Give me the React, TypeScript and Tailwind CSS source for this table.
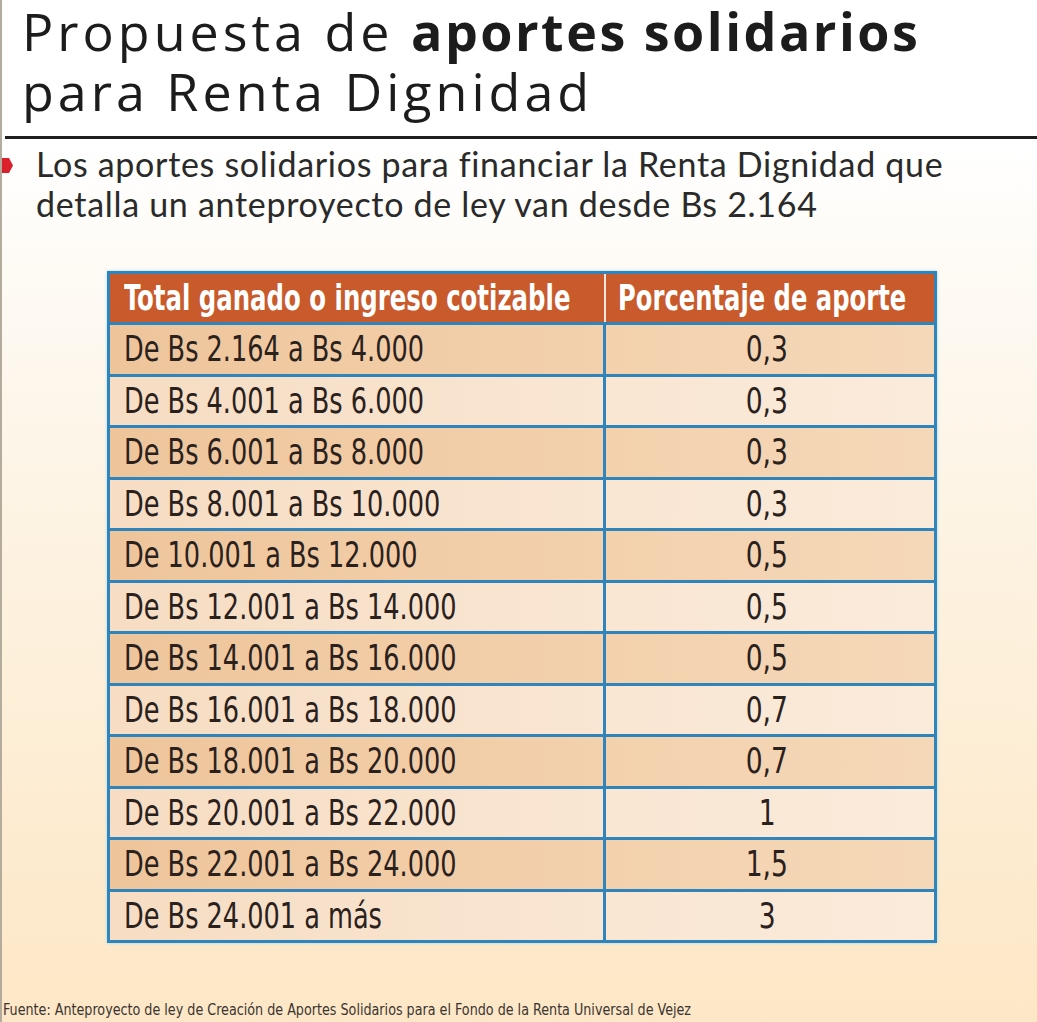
const rows: [string, string][] = [
  ["De Bs 2.164 a Bs 4.000", "0,3"],
  ["De Bs 4.001 a Bs 6.000", "0,3"],
  ["De Bs 6.001 a Bs 8.000", "0,3"],
  ["De Bs 8.001 a Bs 10.000", "0,3"],
  ["De 10.001 a Bs 12.000", "0,5"],
  ["De Bs 12.001 a Bs 14.000", "0,5"],
  ["De Bs 14.001 a Bs 16.000", "0,5"],
  ["De Bs 16.001 a Bs 18.000", "0,7"],
  ["De Bs 18.001 a Bs 20.000", "0,7"],
  ["De Bs 20.001 a Bs 22.000", "1"],
  ["De Bs 22.001 a Bs 24.000", "1,5"],
  ["De Bs 24.001 a más", "3"],
];

const narrow =
  "font-['Liberation_Sans_Narrow','DejaVu_Sans_Condensed','DejaVu_Sans',sans-serif] [font-stretch:condensed]";

export default function App() {
  return (
    <div className="relative w-[1037px] h-[1022px] overflow-hidden border-l-2 border-[#b3ab9c] bg-[linear-gradient(180deg,#ffffff_0%,#ffffff_14%,#fdf6ea_40%,#fdedd4_75%,#fde7c6_100%)]">
      {/* titulo */}
      <h1 className="pl-[20px] pt-[1px] text-[52px] leading-[60px] text-[#1c1c1c] font-['Open_Sans',sans-serif] tracking-[4px] whitespace-nowrap">
        Propuesta de <span className="font-bold tracking-[2.5px]">aportes solidarios</span>
        <br />
        para Renta Dignidad
      </h1>

      <div className="ml-[3px] mt-[15px] h-[3px] bg-[#1f1f1f]" />

      <div className="flex items-start mt-[5px]">
        <svg width="11" height="15" viewBox="0 0 11 15" className="mt-[14px] shrink-0">
          <polygon points="0,0 7,0 11,7.5 7,15 0,15" fill="#d9202b" />
        </svg>
        <p className="ml-[23px] text-[34px] leading-[40px] tracking-[0.7px] text-[#2a2a2a] font-['Lato',sans-serif] whitespace-nowrap">
          Los aportes solidarios para financiar la Renta Dignidad que
          <br />
          detalla un anteproyecto de ley van desde Bs 2.164
        </p>
      </div>

      {/* tabla */}
      <div
        className={`ml-[105px] mt-[47px] w-[830px] border-[3px] border-[#2f84bb] shadow-[0_0_3px_#9fdcef] whitespace-nowrap ${narrow}`}
      >
        <div className="flex h-[48px] bg-[#c85a2b] text-white font-bold text-[35px]">
          <div className="w-[496px] flex items-center pl-[14px] border-r-2 border-[#f3e6dc]">
            <span className="inline-block origin-left scale-x-[0.775]">Total ganado o ingreso cotizable</span>
          </div>
          <div className="flex-1 flex items-center pl-[12px]">
            <span className="inline-block origin-left scale-x-[0.77]">Porcentaje de aporte</span>
          </div>
        </div>
        {rows.map(([range, pct], i) => (
          <div
            key={range}
            className={`flex h-[51.5px] border-t-[3px] border-[#2f84bb] text-[36px] text-[#2a211d] ${
              i % 2 === 0
                ? "bg-[linear-gradient(90deg,#eec59b,#f3d1ad_60%,#f5d8b8)]"
                : "bg-[linear-gradient(90deg,#f6ddc3,#f9e6d3_60%,#fbebda)]"
            }`}
          >
            <div className="w-[496px] flex items-center pl-[14px] border-r-[3px] border-[#2f84bb]">
              <span className="inline-block origin-left scale-x-[0.79]">{range}</span>
            </div>
            <div className="flex-1 flex items-center justify-center pr-[6px]">
              <span className="inline-block scale-x-[0.82]">{pct}</span>
            </div>
          </div>
        ))}
      </div>

      <p
        className={`absolute left-[1px] bottom-[2px] text-[16px] leading-[20px] text-[#3a3430] whitespace-nowrap ${narrow}`}
      >
        <span className="inline-block origin-left scale-x-[0.885]">
          Fuente: Anteproyecto de ley de Creación de Aportes Solidarios para el Fondo de la Renta Universal de Vejez
        </span>
      </p>
    </div>
  );
}
